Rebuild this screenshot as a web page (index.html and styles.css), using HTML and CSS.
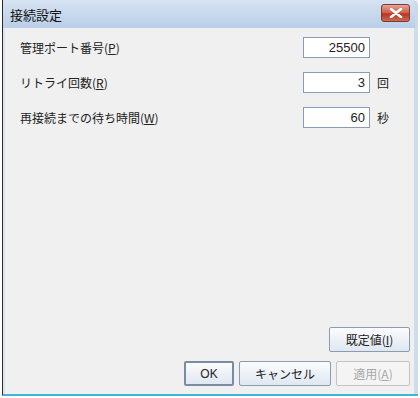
FILE: index.html
```html
<!DOCTYPE html>
<html>
<head>
<meta charset="utf-8">
<link rel="stylesheet" href="styles.css">
<title>接続設定</title>
</head>
<body>
<div class="win">
	<div class="title">
		<span class="caption">接続設定</span>
		<span class="close">
			<svg width="14" height="10" viewBox="0 0 14 10"><path d="M2 1 L12 9 M12 1 L2 9" stroke="#fff" stroke-width="2.6" stroke-linecap="round"/></svg>
		</span>
	</div>
	<div class="body">
		<div class="row">
			<span class="label">管理ポート番号(<u>P</u>)</span>
			<input class="num" type="text" value="25500">
			<span class="unit"></span>
		</div>
		<div class="row">
			<span class="label">リトライ回数(<u>R</u>)</span>
			<input class="num" type="text" value="3">
			<span class="unit">回</span>
		</div>
		<div class="row">
			<span class="label">再接続までの待ち時間(<u>W</u>)</span>
			<input class="num" type="text" value="60">
			<span class="unit">秒</span>
		</div>
		<div class="space"></div>
		<div class="btns top">
			<button class="btn wide">既定値(<u>I</u>)</button>
		</div>
		<div class="btns">
			<button class="btn ok">OK</button>
			<button class="btn cancel">キャンセル</button>
			<button class="btn apply" disabled>適用(<u>A</u>)</button>
		</div>
	</div>
</div>
</body>
</html>
```
FILE: styles.css
```css
* {padding:0; margin:0; box-sizing:border-box;}
body {background:#fff; width:420px; height:398px; overflow:hidden; font-family:"Noto Sans CJK JP", "Liberation Sans", sans-serif; font-size:12px; color:#222;}
u {text-decoration:underline;}

.win {margin-left:2px; width:416px; height:396px; display:flex; flex-direction:column; border-left:1px solid #2b2b2b; border-bottom:2px solid #3fb6d8; background:#f0f0f0;}
.title {height:28px; display:flex; align-items:center; padding:0 5px 0 7px; background:linear-gradient(#d6e3f2, #b9cfe8); border-right:3px solid #c8d9ee; border-top-right-radius:6px;}
.caption {flex:1; font-size:13px; color:#111;}
.close {width:29px; height:18px; margin-top:-3px; display:flex; align-items:center; justify-content:center; border:1px solid #7a3b32; border-radius:3px; background:linear-gradient(#e3a496, #cf5a45 50%, #b8331f 55%, #cd6a52);}

.body {flex:1; display:flex; flex-direction:column; padding:9px 4px 8px 15px; border-left:2px solid #dbe4f0; border-right:4px solid #cfdcec;}
.row {display:flex; align-items:center; height:21px; margin-bottom:14px;}
.label {flex:1;}
.num {width:67px; height:21px; border:1px solid #8a9cb4; background:#fff; text-align:right; padding-right:4px; font-family:"Liberation Sans", sans-serif; font-size:13px; color:#222;}
.unit {width:40px; padding-left:7px; font-size:12px;}
.space {flex:1;}

.btns {display:flex; justify-content:flex-end; gap:5px;}
.btns.top {margin-bottom:9px;}
.btn {height:25px; border:1px solid #8d9bb0; border-radius:2px; background:linear-gradient(#fbfcfe, #dfe7f1); font-family:"Noto Sans CJK JP", "Liberation Sans", sans-serif; font-size:12px; color:#222;}
.wide {width:81px;}
.ok {width:50px; border:2px solid #7b8ba4; font-family:"Liberation Sans", sans-serif;}
.cancel {width:92px;}
.apply {width:74px; background:#f4f4f4; border-color:#c4c4c4; color:#a8a8a8;}
```
